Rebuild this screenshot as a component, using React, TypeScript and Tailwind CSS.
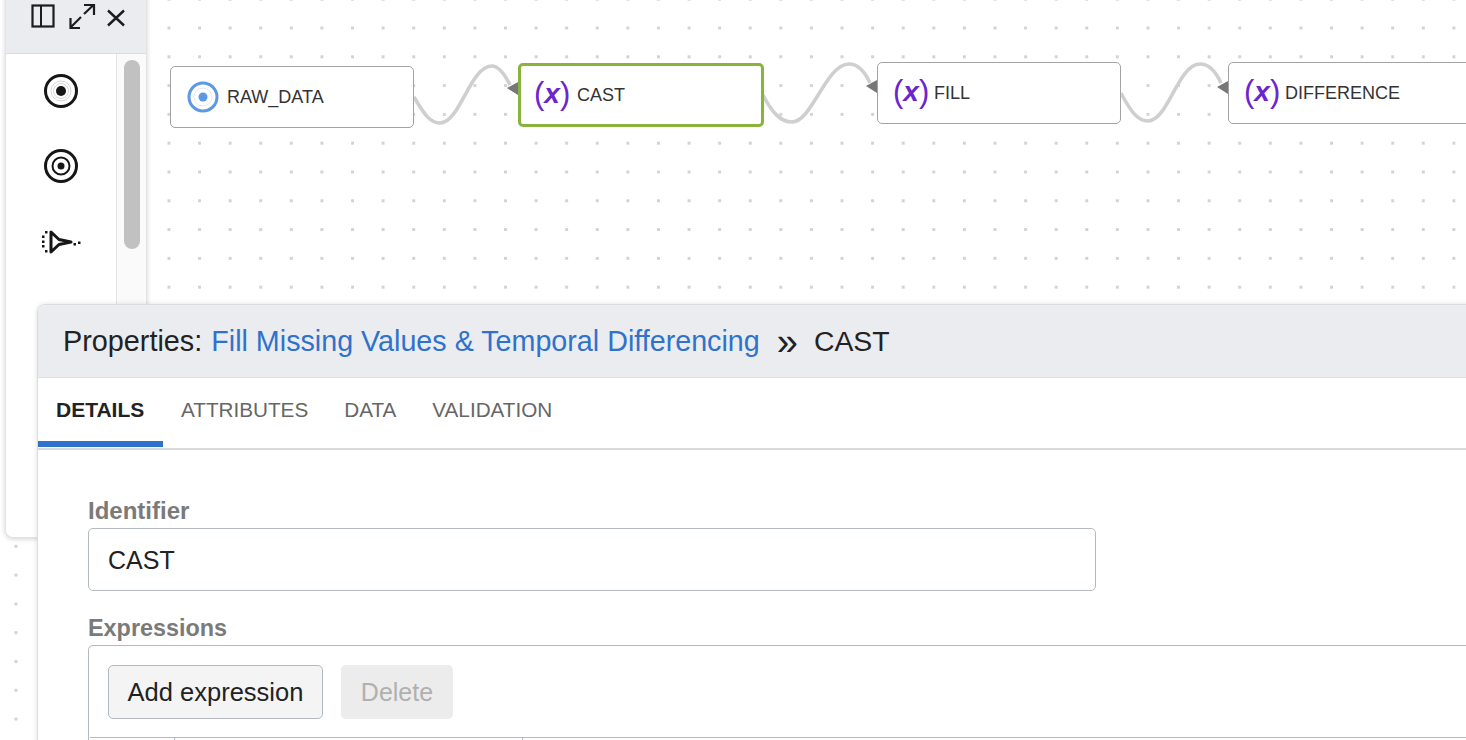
const font = "[font-family:'Liberation_Sans',Arial,sans-serif]";

const VarGlyph = () => (
	<span className="flex items-center text-[#6b25cf] text-[31px] leading-none w-[35px] h-[36px] justify-between shrink-0">
		<span className="-mt-[3px]">(</span>
		<span className="italic font-bold text-[28px] -mt-[3px]">x</span>
		<span className="-mt-[3px]">)</span>
	</span>
);

const Node = ({
	label,
	className,
	children,
}: {
	label: string;
	className: string;
	children: React.ReactNode;
}) => (
	<div
		className={`absolute flex items-center bg-white rounded-[5px] text-[#333] text-[18px] ${className}`}
	>
		{children}
		<span>{label}</span>
	</div>
);

const PanelIcons = () => (
	<svg width="100" height="30" viewBox="0 0 100 30" fill="none" stroke="#1c1c1c" strokeWidth="2.4">
		<rect x="1.5" y="5.5" width="21" height="21" strokeWidth="2.2" />
		<path d="M10 5.5V26.5" strokeWidth="2" />
		<path d="M39.5 27.5L50 17M53 14L62.5 5M53 5H63V15M39.5 18V28H49" strokeWidth="2.2" />
		<path d="M77 10.5L93 25.5M93 10.5L77 25.5" />
	</svg>
);

const Sidebar = () => (
	<div className="absolute left-[5px] top-[-10px] w-[142px] h-[548px] bg-white rounded-b-[8px] border border-[#e4e4e4] shadow-[0_1px_5px_rgba(0,0,0,0.18)] flex flex-col overflow-hidden">
		<div className="h-[63px] shrink-0 bg-[#ebecf0] border-b border-[#dcdde1] pt-[9px] pl-[25px]">
			<PanelIcons />
		</div>
		<div className="flex flex-1">
			<div className="w-[110px] flex flex-col items-center pt-[18px] gap-[37px]">
				<svg width="38" height="38" viewBox="0 0 38 38" fill="none">
					<circle cx="19" cy="19" r="15.5" stroke="#161616" strokeWidth="3" />
					<circle cx="19" cy="19" r="10" stroke="#bbb" strokeWidth="0.6" />
					<circle cx="19" cy="19" r="7.5" stroke="#bbb" strokeWidth="0.6" />
					<circle cx="19" cy="19" r="5" fill="#161616" />
				</svg>
				<svg width="38" height="38" viewBox="0 0 38 38" fill="none">
					<circle cx="19" cy="19" r="15.5" stroke="#161616" strokeWidth="3" />
					<circle cx="19" cy="19" r="8.5" stroke="#161616" strokeWidth="2" />
					<circle cx="19" cy="19" r="3.5" fill="#161616" />
				</svg>
				<svg className="mt-[7px]" width="42" height="26" viewBox="0 0 42 26" fill="none">
					<path d="M11 3V23L19 15.5L31 13L19 10.5Z" stroke="#161616" strokeWidth="3" strokeLinejoin="round" />
					<g fill="#161616">
						<rect x="5" y="2" width="2.5" height="2.5" />
						<rect x="2" y="6.5" width="2.5" height="2.5" />
						<rect x="2" y="11.5" width="2.5" height="2.5" />
						<rect x="2" y="16" width="2.5" height="2.5" />
						<rect x="5" y="21" width="2.5" height="2.5" />
						<rect x="33.5" y="14" width="2.5" height="2.5" />
						<rect x="38" y="12.5" width="2.5" height="2.5" />
					</g>
				</svg>
			</div>
			<div className="flex-1 border-l border-[#e4e4e4] bg-[#fafafa] pt-[6px] pl-[7px]">
				<div className="w-[16px] h-[189px] rounded-full bg-[#c1c1c1]" />
			</div>
		</div>
	</div>
);

const Tab = ({ label, active }: { label: string; active?: boolean }) => (
	<div
		className={`relative h-full pl-[18px] pr-[18px] pt-[20px] leading-[24px] ${
			active ? "w-[125px] text-[21px] font-bold text-[#222]" : "text-[20.7px] text-[#666]"
		}`}
	>
		{label}
		{active && <div className="absolute left-0 right-0 bottom-[1px] h-[6px] bg-[#2f72cc]" />}
	</div>
);

const PropertiesPanel = () => (
	<div className="absolute left-[37px] top-[304px] w-[1480px] h-[460px] bg-white rounded-tl-[8px] border border-[#dcdcdc] shadow-[0_0_5px_rgba(0,0,0,0.12)]">
		<div className="h-[73px] bg-[#ebecf0] border-b border-[#dfe0e4] rounded-tl-[8px] flex items-baseline pl-[25px] pt-[13px] leading-[40px] text-[28.8px] text-[#222]">
			<span>Properties:</span>
			<span className="ml-[9px] text-[28.7px] text-[#2f72cc]">Fill Missing Values &amp; Temporal Differencing</span>
			<span className="ml-[17px] translate-y-[4px] text-[38px] text-[#222]">»</span>
			<span className="ml-[16px] text-[28.4px]">CAST</span>
		</div>
		<div className="h-[72px] flex border-b-2 border-[#d9d9dd]">
			<Tab label="DETAILS" active />
			<Tab label="ATTRIBUTES" />
			<Tab label="DATA" />
			<Tab label="VALIDATION" />
		</div>
		<div className="pl-[50px] pt-[47px]">
			<div className="text-[24px] leading-[28px] font-bold text-[#7a7a7a]">Identifier</div>
			<div className="mt-[3px] w-[1008px] h-[63px] border border-[#b4b8c0] rounded-[5px] flex items-center pl-[19px] pt-[2px] text-[25px] text-[#222]">
				CAST
			</div>
			<div className="mt-[23px] text-[23.4px] leading-[28px] font-bold text-[#7a7a7a]">Expressions</div>
			<div className="mt-[3px] border border-[#b4b8c0] rounded-tl-[5px] h-[120px]">
				<div className="flex gap-[18px] pt-[19px] pl-[19px]">
					<div className="w-[215px] h-[54px] flex items-center justify-center bg-[#f4f4f4] border border-[#b4b8c0] rounded-[5px] text-[25.5px] text-[#222]">
						Add expression
					</div>
					<div className="w-[112px] h-[54px] flex items-center justify-center bg-[#ececec] rounded-[5px] pt-[2px] text-[25px] text-[#b0b0b0]">
						Delete
					</div>
				</div>
				<div className="mt-[18px] ml-[1px] h-[20px] border-t border-[#b4b8c0] grid grid-cols-[85px_348px_1fr]">
					<div className="border-r border-[#b4b8c0]" />
					<div className="border-r border-[#b4b8c0]" />
					<div />
				</div>
			</div>
		</div>
	</div>
);

const App = () => {
	return (
		<div
			className={`relative w-[1466px] h-[740px] overflow-hidden bg-white ${font} bg-[radial-gradient(#d3d3d3_1.6px,transparent_1.7px)] bg-[size:30.6px_28.8px] bg-[position:0.7px_13.6px]`}
		>
			<svg className="absolute inset-0" width="1466" height="740" fill="none">
				<g stroke="#cfcfcf" strokeWidth="3.6">
					<path d="M414 97C424 114 430 123 440 123C460 123 470 66 492 66C499 66 505 75 510 85" />
					<path d="M763 95C772 112 780 122 792 122C812 122 826 64 849 64C858 64 865 72 870 83" />
					<path d="M1121 93C1130 110 1137 121 1148 121C1168 121 1178 64 1200 64C1209 64 1216 72 1221 83" />
				</g>
				<g fill="#777">
					<path d="M507 88L518 82V95Z" />
					<path d="M866 86L877 80V93Z" />
					<path d="M1217 87L1228 81V94Z" />
				</g>
			</svg>

			<Node label="RAW_DATA" className="left-[170px] top-[66px] w-[244px] h-[62px] border border-[#a3a3a3] pl-[16px] gap-[8px] text-[17.6px]">
				<svg width="32" height="32" viewBox="0 0 32 32" fill="none">
					<circle cx="16" cy="16" r="14" stroke="#5c98e4" strokeWidth="3" />
					<circle cx="16" cy="16" r="9" stroke="#c4d9f5" strokeWidth="0.6" />
					<circle cx="16" cy="16" r="4.5" fill="#5c98e4" />
				</svg>
			</Node>
			<Node label="CAST" className="left-[518px] top-[63px] w-[246px] h-[64px] border-[3px] border-[#88b43e] pl-[13px] gap-[8px]">
				<VarGlyph />
			</Node>
			<Node label="FILL" className="left-[877px] top-[62px] w-[244px] h-[62px] border border-[#a3a3a3] pl-[15px] gap-[6px]">
				<VarGlyph />
			</Node>
			<Node label="DIFFERENCE" className="left-[1228px] top-[62px] w-[260px] h-[62px] border border-[#a3a3a3] pl-[15px] gap-[6px]">
				<VarGlyph />
			</Node>

			<Sidebar />
			<PropertiesPanel />
		</div>
	);
};

export default App;
